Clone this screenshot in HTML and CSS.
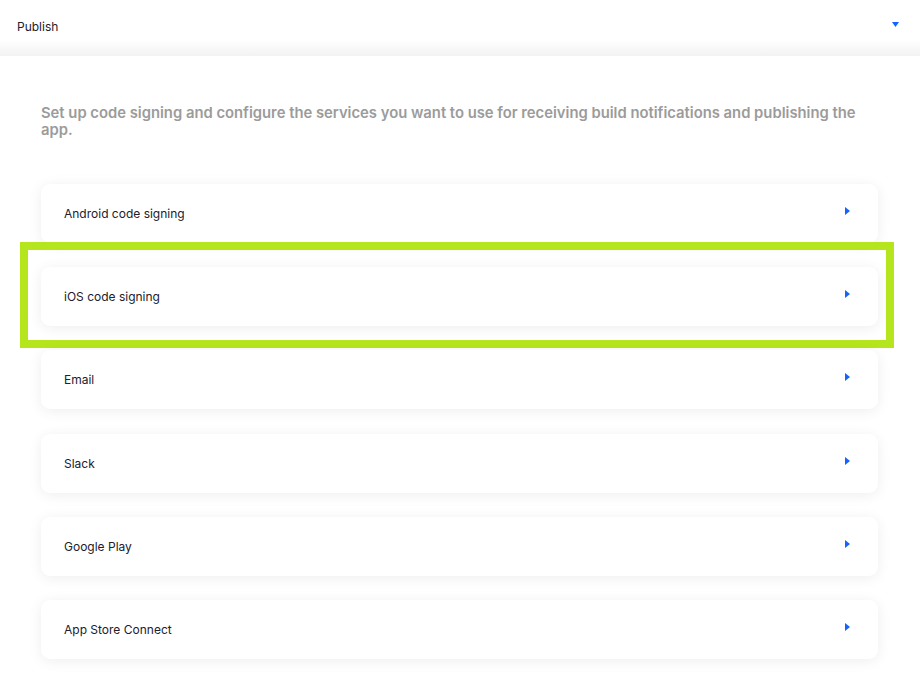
FILE: index.html
```html
<!DOCTYPE html>
<html>
<head>
<meta charset="utf-8">
<link rel="stylesheet" href="styles.css">
</head>
<body>
<header class="header">
  <span class="header-title">Publish</span>
  <svg class="caret-down" width="7" height="5" viewBox="0 0 7 5"><path d="M0 0H7L3.5 5Z" fill="#1463ff"/></svg>
</header>
<main class="content">
  <p class="intro">Set up code signing and configure the services you want to use for receiving build notifications and publishing the app.</p>
  <ul class="list">
    <li class="card"><span>Android code signing</span><svg class="caret-right" width="5" height="8" viewBox="0 0 5 8"><path d="M0 0L5 4L0 8Z" fill="#1463ff"/></svg></li>
    <li class="card highlighted"><span>iOS code signing</span><svg class="caret-right" width="5" height="8" viewBox="0 0 5 8"><path d="M0 0L5 4L0 8Z" fill="#1463ff"/></svg></li>
    <li class="card"><span>Email</span><svg class="caret-right" width="5" height="8" viewBox="0 0 5 8"><path d="M0 0L5 4L0 8Z" fill="#1463ff"/></svg></li>
    <li class="card"><span>Slack</span><svg class="caret-right" width="5" height="8" viewBox="0 0 5 8"><path d="M0 0L5 4L0 8Z" fill="#1463ff"/></svg></li>
    <li class="card"><span>Google Play</span><svg class="caret-right" width="5" height="8" viewBox="0 0 5 8"><path d="M0 0L5 4L0 8Z" fill="#1463ff"/></svg></li>
    <li class="card"><span>App Store Connect</span><svg class="caret-right" width="5" height="8" viewBox="0 0 5 8"><path d="M0 0L5 4L0 8Z" fill="#1463ff"/></svg></li>
  </ul>
</main>
</body>
</html>
```
FILE: styles.css
```css
* { box-sizing: border-box; }
html, body { margin: 0; padding: 0; background: #fff; }
body { font-family: Inter, "Noto Sans", sans-serif; color: #20202e; width: 920px; height: 685px; overflow: hidden; }

.header {
  height: 56px;
  display: flex;
  align-items: flex-start;
  justify-content: space-between;
  padding: 20px 21px 0 17px;
  background: linear-gradient(to bottom, #ffffff 0, #ffffff 40px, #f2f2f2 56px);
}
.header-title { font-size: 12px; line-height: 14px; }
.caret-down { margin-top: 2px; }

.content { padding: 49px 42px 0 41px; }
.intro {
  margin: 0;
  font-size: 14.8px;
  line-height: 17px;
  font-weight: 600;
  color: #9b9b9b;
}
.list { list-style: none; margin: 45px 0 0; padding: 0; display: flex; flex-direction: column; gap: 24.2px; }
.card {
  position: relative;
  height: 59px;
  border-radius: 9px;
  background: #fff;
  box-shadow: 0 2px 14px rgba(0, 0, 0, 0.07);
  display: flex;
  align-items: center;
  justify-content: space-between;
  padding: 0 28px 0 23px;
  font-size: 12px;
}
.card span { margin-top: 0; }
.caret-right { margin-top: -5px; }
.highlighted::after {
  content: "";
  position: absolute;
  top: -25px;
  left: -21px;
  right: -16px;
  bottom: -22px;
  border: 8px solid #b5e61d;
  pointer-events: none;
}
```
